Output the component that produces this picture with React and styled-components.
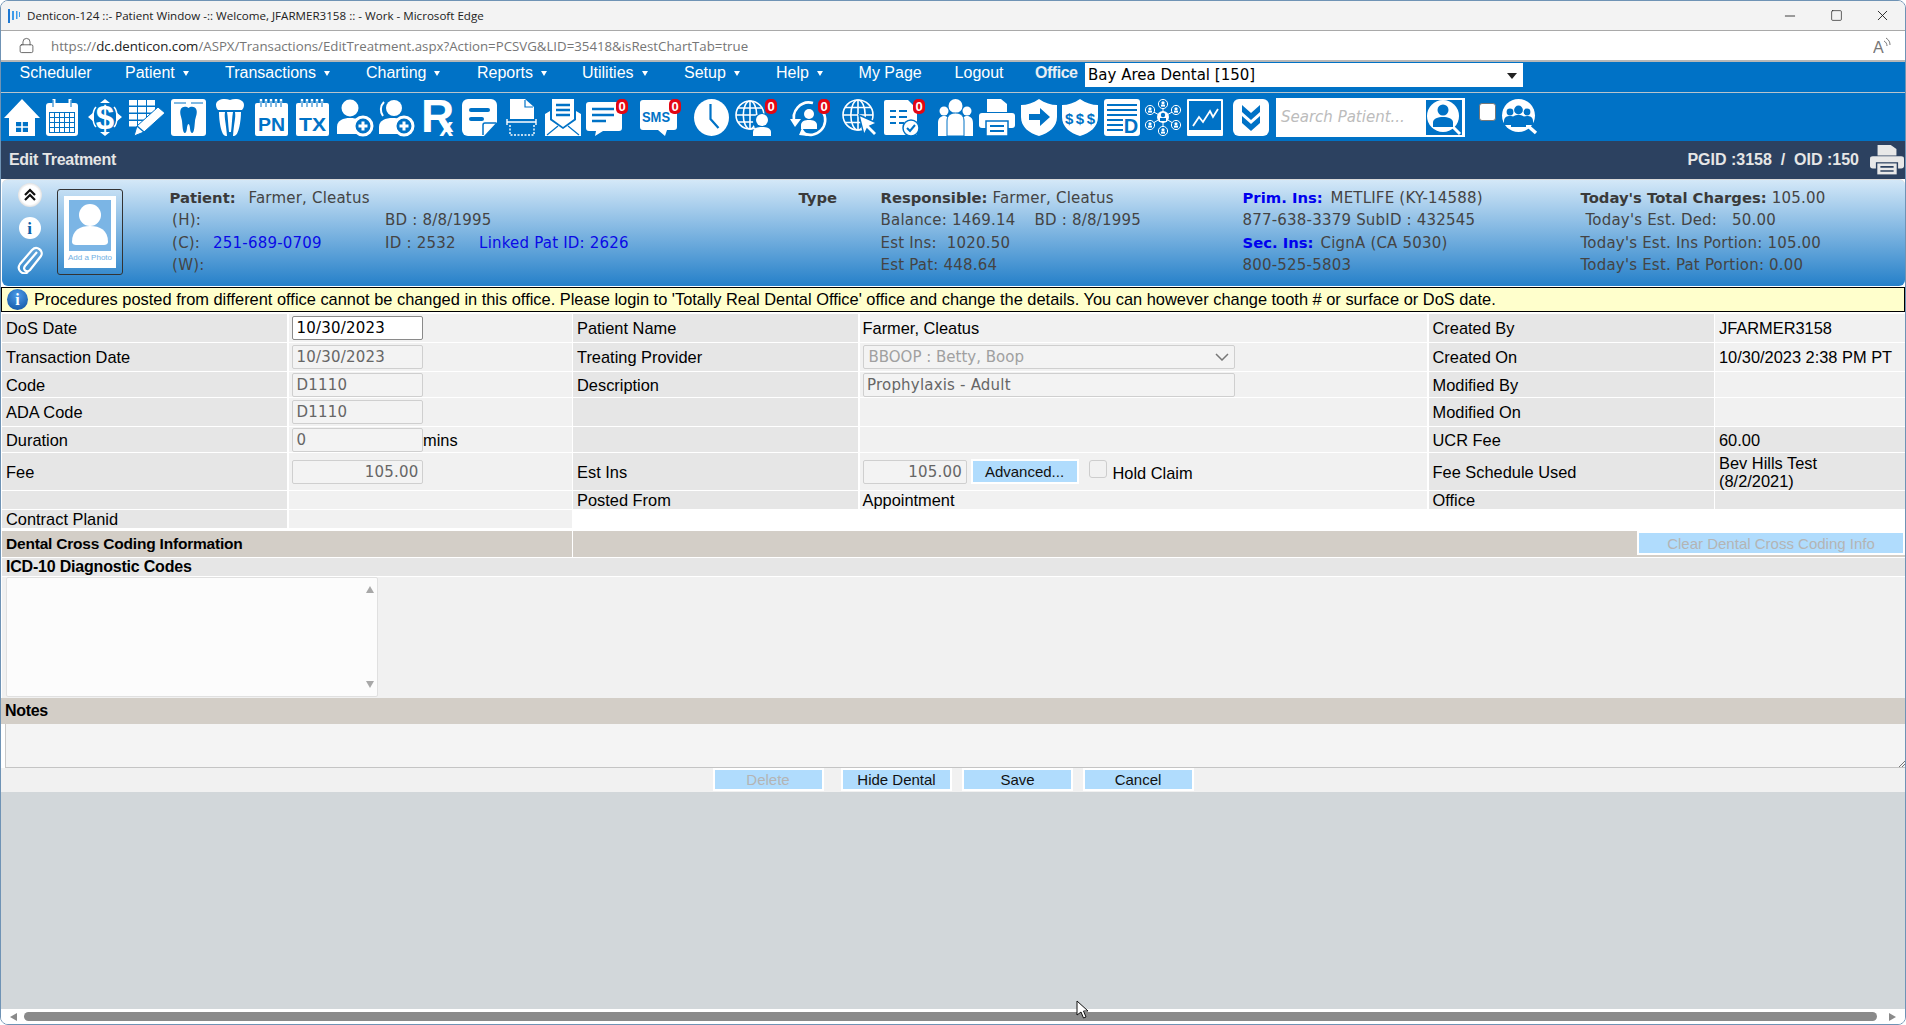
import React from 'react';
import styled, { createGlobalStyle } from 'styled-components';
import { Lock, Minus, Square, X } from 'lucide-react';

const BLUE = '#0072C6';
const ARIAL = '"Liberation Sans", Arial, sans-serif';
const VERDANA = '"DejaVu Sans", Verdana, sans-serif';

const GlobalStyle = createGlobalStyle`
  html, body {
    margin: 0;
    height: 100%;
    overflow: hidden;
    background: #fff;
  }
  #root {
    height: 100%;
  }
  * {
    box-sizing: border-box;
  }
`;

const Win = styled.div`
  position: relative;
  height: 100vh;
  display: flex;
  flex-direction: column;
  border: 1px solid #6f93b5;
  border-radius: 8px 8px 8px 8px;
  overflow: hidden;
  background: #fff;
  font-family: ${ARIAL};
  font-size: 16px;
  color: #000;
`;

const TitleBar = styled.div`
  height: 30px;
  flex: none;
  display: flex;
  align-items: center;
  background: #f3f3f3;
  border-bottom: 1px solid #a9a9a9;
  padding-left: 6px;
  font-family: "Open Sans", sans-serif;
  font-size: 11.6px;
  color: #222;
`;

const TitleText = styled.span`
  margin-left: 7px;
  flex: 1;
`;

const WinButton = styled.span`
  width: 46px;
  display: flex;
  justify-content: center;
  color: #111;
`;

const AddressBar = styled.div`
  height: 31px;
  flex: none;
  display: flex;
  align-items: center;
  background: #fff;
  border-bottom: 2px solid #b7b7b7;
  padding: 0 14px 0 17px;
  font-family: "Open Sans", sans-serif;
  font-size: 13.25px;
  color: #767676;
`;

const Url = styled.span`
  margin-left: 16px;
  flex: 1;
  b {
    font-weight: 400;
    color: #222;
  }
`;

const Nav = styled.div`
  height: 31px;
  flex: none;
  display: flex;
  align-items: flex-start;
  background: ${BLUE};
  border-bottom: 1px solid #b9c4cc;
  padding-left: 18.6px;
  color: #fff;
  line-height: 22px;
`;

const NavItem = styled.div`
  width: ${p => p.$w}px;
  flex: none;
  display: flex;
  align-items: center;
`;

const NavCaret = styled.span`
  margin-left: 8px;
  margin-top: 1px;
  border-left: 3px solid transparent;
  border-right: 3px solid transparent;
  border-top: 5px solid #fff;
`;

const OfficeLabel = styled.b`
  width: 50px;
  flex: none;
  color: #e8eef3;
  letter-spacing: -0.5px;
`;

const OfficeSelect = styled.div`
  width: 438px;
  height: 24px;
  margin-top: 1px;
  display: flex;
  align-items: center;
  justify-content: space-between;
  padding: 0 6px 0 3px;
  background: #fff;
  color: #000;
  font-family: ${VERDANA};
  font-size: 15px;
`;

const OfficeCaret = styled.span`
  margin-top: 2px;
  border-left: 5px solid transparent;
  border-right: 5px solid transparent;
  border-top: 6px solid #222;
`;

const Toolbar = styled.div`
  height: 48px;
  flex: none;
  display: flex;
  align-items: center;
  background: ${BLUE};
  padding-left: 3px;
`;

const ToolSlot = styled.div`
  position: relative;
  flex: none;
  display: flex;
  margin-left: ${p => p.$gap}px;
  width: ${p => p.$w}px;
  height: 37px;
`;

const Badge = styled.span`
  position: absolute;
  top: 0;
  right: -1px;
  width: 12px;
  height: 15px;
  border-radius: 5px;
  background: #e30613;
  color: #fff;
  font: 700 13px/15px ${ARIAL};
  text-align: center;
`;

const SearchBox = styled.div`
  width: 189px;
  height: 39px;
  margin-left: 7px;
  flex: none;
  display: flex;
  align-items: center;
  justify-content: space-between;
  background: #fff;
  padding: 0 3px 0 5px;
  font: italic 15px ${VERDANA};
  color: #bcbcbc;
`;

const ToolCheck = styled.span`
  width: 17px;
  height: 18px;
  margin: 0 0 10px 14px;
  flex: none;
  background: #fff;
  border: 1px solid #777;
  border-radius: 3px;
`;

const PageBar = styled.div`
  height: 38px;
  flex: none;
  display: flex;
  align-items: center;
  justify-content: space-between;
  background: #2c4160;
  color: #e6e6e6;
  font-weight: 700;
  padding: 0 1px 0 8px;
`;

const PageTitle = styled.span`
  letter-spacing: -0.3px;
`;

const PageIds = styled.div`
  display: flex;
  align-items: center;
  gap: 11px;
`;

const PatientHeader = styled.div`
  height: 107px;
  flex: none;
  margin: 0 0 1px 1px;
  display: flex;
  align-items: flex-start;
  border-radius: 6px;
  background: linear-gradient(#d4e8f8, #2580c9);
  border-top: 1px solid #d9d9d9;
  padding-top: 7px;
  font-family: ${VERDANA};
  font-size: 15px;
  line-height: 22.4px;
  color: #444;
`;

const SideIcons = styled.div`
  width: 55px;
  flex: none;
  margin-top: -4px;
  display: flex;
  flex-direction: column;
  align-items: center;
`;

const RoundIcon = styled.span`
  width: ${p => p.$size}px;
  height: ${p => p.$size}px;
  margin-bottom: ${p => p.$mb}px;
  border-radius: 50%;
  display: flex;
  align-items: center;
  justify-content: center;
  background: ${p => p.$bg};
  color: #0d5ea8;
  font: 700 17px/1 "Liberation Serif", serif;
`;

const PhotoFrame = styled.div`
  width: 66px;
  height: 86px;
  flex: none;
  margin-top: 2px;
  display: flex;
  align-items: center;
  justify-content: center;
  border: 1px solid #333;
  border-radius: 3px;
`;

const PhotoCard = styled.div`
  width: 52px;
  height: 72px;
  display: flex;
  flex-direction: column;
  align-items: center;
  padding-top: 4px;
  background: #fff;
  font: 8px/14px ${ARIAL};
  color: #6eaee3;
`;

const InfoColumn = styled.div`
  width: ${p => p.$w}px;
  margin-left: ${p => p.$ml || 0}px;
  flex: none;
  letter-spacing: 0.2px;
`;

const Line = styled.div`
  display: flex;
  height: 22.4px;
  white-space: nowrap;
  padding-left: ${p => p.$pl || 0}px;
`;

const Part = styled.span`
  width: ${p => p.$w}px;
  flex: none;
`;

const Strong = styled.b`
  color: ${p => (p.$blue ? '#0000ee' : '#3a3a3a')};
  font-size: 14.8px;
  font-weight: 700;
  letter-spacing: 0;
`;

const Linked = styled.span`
  color: #0a0ae6;
`;

const Alert = styled.div`
  height: 25px;
  flex: none;
  display: flex;
  align-items: center;
  gap: 6px;
  border: 1px solid #000;
  background: #ffffcc;
  padding-left: 5px;
  font-size: 16.4px;
`;

const InfoDot = styled.span`
  width: 21px;
  height: 21px;
  flex: none;
  border-radius: 50%;
  display: flex;
  align-items: center;
  justify-content: center;
  background: radial-gradient(circle at 50% 30%, #4d9be8, #0b4f9e);
  color: #fff;
  font: 700 16px/1 "Liberation Serif", serif;
`;

const FormGrid = styled.div`
  flex: none;
  margin: 2px 0 0 1px;
  display: grid;
  grid-template-columns: 285px 283px 285px 567.5px 285px 1fr;
  grid-template-rows: 28px 28px 25px 28px 25px 37px 18px 18px;
  column-gap: 1.5px;
  row-gap: 1px;
`;

const Cell = styled.div`
  display: flex;
  align-items: center;
  min-width: 0;
  background: ${p => (p.$label ? '#e6e6e6' : '#f1f1f1')};
  padding-left: ${p => p.$pl || (p.$label ? 4 : 3.5)}px;
  font-size: 16.4px;
  line-height: 18px;
  white-space: nowrap;
`;

const Field = styled.input`
  width: ${p => p.$w}px;
  height: 24px;
  flex: none;
  padding: 0 3.5px;
  border: 1px solid ${p => (p.$active ? '#8a8a8a' : '#cfcfcf')};
  border-radius: 2px;
  background: ${p => (p.$active ? '#fff' : '#f3f3f3')};
  color: ${p => (p.$active ? '#000' : '#666')};
  font-family: ${VERDANA};
  font-size: 15px;
  letter-spacing: 0.2px;
  text-align: ${p => (p.$right ? 'right' : 'left')};
  outline: none;
`;

const SelectBox = styled.div`
  width: 372px;
  height: 24px;
  display: flex;
  align-items: center;
  justify-content: space-between;
  padding: 0 5px;
  border: 1px solid #cfcfcf;
  border-radius: 2px;
  background: #f3f3f3;
  color: #a0a0a0;
  font-family: ${VERDANA};
  font-size: 15px;
`;

const Btn = styled.button`
  width: ${p => p.$w}px;
  height: ${p => p.$h || 23}px;
  flex: none;
  margin-left: ${p => p.$ml || 0}px;
  margin-bottom: ${p => p.$mb || 0}px;
  padding: 0;
  border: 2px solid #fff;
  background: #b0dcfd;
  color: ${p => (p.disabled ? '#b4b4b4' : '#111')};
  font-family: ${ARIAL};
  font-size: 15px;
`;

const CheckBox = styled.span`
  width: 18px;
  height: 18px;
  flex: none;
  margin: -6px 0 0 10px;
  border: 1px solid #cdcdcd;
  border-radius: 3px;
  background: #f1f1f1;
`;

const HoldLabel = styled.span`
  margin: 3px 0 0 6px;
`;

const CrossRow = styled.div`
  height: 26px;
  flex: none;
  margin: 3px 0 0 1px;
  display: grid;
  grid-template-columns: 569.5px 1fr;
  column-gap: 1.5px;
`;

const Band = styled.div`
  display: flex;
  align-items: center;
  justify-content: ${p => (p.$end ? 'flex-end' : 'flex-start')};
  background: #d3cec7;
  padding-left: 4px;
  font-size: 15.5px;
  letter-spacing: -0.2px;
  font-weight: ${p => (p.$end ? 400 : 700)};
`;

const IcdTitle = styled.div`
  height: 18px;
  flex: none;
  margin: 1px 0 0 1px;
  display: flex;
  align-items: center;
  background: #e6e6e6;
  padding-left: 4px;
  font-weight: 700;
  letter-spacing: -0.2px;
`;

const IcdArea = styled.div`
  height: 121px;
  flex: none;
  margin: 1px 0 0 1px;
  background: #f1f1f1;
  padding-left: 4px;
`;

const ListBox = styled.div`
  width: 372px;
  height: 120px;
  display: flex;
  flex-direction: column;
  align-items: flex-end;
  justify-content: space-between;
  padding: 8px 3px 8px 0;
  border: 1px solid #e0e0e0;
  border-radius: 2px;
  background: #fcfcfc;
`;

const ScrollTri = styled.span`
  border-left: 4.5px solid transparent;
  border-right: 4.5px solid transparent;
  ${p => (p.$down ? 'border-top' : 'border-bottom')}: 7px solid #a8a8a8;
`;

const NotesTitle = styled(Band)`
  height: 26px;
  flex: none;
  justify-content: flex-start;
  padding-left: 4px;
  font-size: 16px;
  letter-spacing: -0.3px;
  font-weight: 700;
`;

const NotesBox = styled.div`
  position: relative;
  height: 44px;
  flex: none;
  margin-left: 4px;
  background: #f4f4f4;
  border-left: 1px solid #c8c8c8;
  border-bottom: 1px solid #c4c4c4;
`;

const Grip = styled.svg`
  position: absolute;
  right: 0;
  bottom: 0;
`;

const Actions = styled.div`
  height: 24px;
  flex: none;
  display: flex;
  justify-content: center;
  background: #f1f1f1;
`;

const Backdrop = styled.div`
  flex: 1;
  background: #d2d7da;
`;

const HScroll = styled.div`
  height: 15px;
  flex: none;
  display: flex;
  align-items: center;
  background: #fff;
  padding: 0 9px 0 9px;
`;

const HTri = styled.span`
  flex: none;
  border-top: 4.5px solid transparent;
  border-bottom: 4.5px solid transparent;
  ${p => (p.$right ? 'border-left' : 'border-right')}: 7px solid #8a8a8a;
`;

const HThumb = styled.div`
  height: 9px;
  flex: 1;
  margin: 0 12px 0 7px;
  border-radius: 5px;
  background: #8a8a8a;
`;

const Pointer = styled.svg`
  position: absolute;
  left: 1075px;
  top: 999px;
`;

// toolbar drawings, all on the 37px high white-on-blue grid
const Head = ({ x, y, r, fill = '#fff' }) => <circle cx={x} cy={y} r={r} fill={fill} />;
const Body = ({ x, y, w, h, fill = '#fff' }) => (
  <path
    d={`M${x} ${y + h}v${-h * 0.45}c0 ${-h * 0.4} ${w * 0.25} ${-h * 0.55} ${w / 2} ${-h * 0.55}s${w / 2} ${h * 0.15} ${w / 2} ${h * 0.55}v${h * 0.45}z`}
    fill={fill}
  />
);
const PlusDisc = ({ x, y, r = 9 }) => (
  <g>
    <circle cx={x} cy={y} r={r} fill={BLUE} stroke="#fff" strokeWidth="3" />
    <path d={`M${x - 4.5} ${y}h9M${x} ${y - 4.5}v9`} stroke="#fff" strokeWidth="3" />
  </g>
);
const Svg = ({ w, children, h = 37 }) => (
  <svg width={w} height={h} viewBox={`0 0 ${w} ${h}`} fill="none" overflow="visible">
    {children}
  </svg>
);
const Globe = ({ x, y, r }) => (
  <g stroke="#fff" strokeWidth="1.6" fill="none">
    <circle cx={x} cy={y} r={r} />
    <ellipse cx={x} cy={y} rx={r * 0.48} ry={r} />
    <path d={`M${x} ${y - r}v${2 * r}M${x - r} ${y}h${2 * r}M${x - r * 0.85} ${y - r * 0.5}h${1.7 * r}M${x - r * 0.85} ${y + r * 0.5}h${1.7 * r}`} />
  </g>
);
const SHIELD = 'M18 0C24 4 30 6 36 6V18C36 28 28 34 18 37C8 34 0 28 0 18V6C6 6 12 4 18 0Z';

const HomeIcon = () => (
  <Svg w={36}>
    <path d="M18 0L36 19H31V37H5V19H0Z" fill="#fff" />
    <path d="M12 23h12v10H12z" fill={BLUE} />
    <path d="M18 23v10M12 28h12" stroke="#fff" strokeWidth="1.6" />
  </Svg>
);
const CalendarIcon = () => (
  <Svg w={32}>
    <rect y="4" width="32" height="33" rx="3" fill="#fff" />
    <path d="M8 0v8M24 0v8" stroke="#fff" strokeWidth="3" />
    <path d="M7 1v7M25 1v7" stroke={BLUE} strokeWidth="1" />
    <rect x="3" y="13" width="26" height="21" fill={BLUE} />
    {[0, 1, 2, 3].map(r => [0, 1, 2, 3, 4].map(c => (
      <rect key={`${r}-${c}`} x={4 + c * 5} y={14 + r * 5} width="4" height="4" fill="#fff" />
    )))}
  </Svg>
);
const DollarIcon = () => (
  <Svg w={34}>
    <text x="17" y="30" textAnchor="middle" fontFamily={ARIAL} fontWeight="700" fontSize="33" fill="#fff">$</text>
    <path d="M0 18l6-5v10zM34 18l-6-5v10zM17 0l5 4H12zM17 37l-5-4h10z" fill="#fff" />
    <path d="M8 8C4 12 4 24 8 28M26 8c4 4 4 16 0 20" stroke="#fff" strokeWidth="1.5" />
  </Svg>
);
const NotesIcon = () => (
  <Svg w={36}>
    {[0, 1, 2, 3].map(r => [0, 1, 2].map(c => (
      <rect key={`${r}-${c}`} x={c * 9} y={1 + r * 7} width="8" height="5.5" fill="#fff" opacity={r + c > 4 ? 0 : 1} />
    )))}
    <path d="M5 37l3-10L29 8l7 6L15 33z" fill="#fff" stroke={BLUE} strokeWidth="1" />
    <path d="M8 27l7 6" stroke={BLUE} strokeWidth="1.4" />
  </Svg>
);
const ToothCardIcon = () => (
  <Svg w={35}>
    <rect width="35" height="37" rx="3" fill="#fff" />
    <path d="M17.5 9c-2-2-7-2-8 2-1 4 1 7 1.500 11 .5 4 .5 12 3 12s1.500-9 3.500-9 1 9 3.500 9 2.500-8 3-12 2.500-7 1.500-11c-1-4-6-4-8-2z" fill={BLUE} />
    <path d="M3 4h12M20 4h12" stroke={BLUE} strokeWidth="1" />
  </Svg>
);
const CrownIcon = () => (
  <Svg w={28}>
    <path d="M14 1C9-1 0 0 0 6c0 2 1 4 2 5h24c1-1 2-3 2-5 0-6-9-7-14-5z" fill="#fff" />
    <path d="M3 13h6c-1 6 1 10 2 24h-1C5 37 3 21 3 13zM25 13h-6c1 6-1 10-2 24h1c5 0 7-16 7-24zM11 13h6c-1 5-1 12-2 20h-2c-1-8-1-15-2-20z" fill="#fff" />
  </Svg>
);
const CardText = ({ label }) => (
  <Svg w={33}>
    <rect y="4" width="33" height="33" rx="2" fill="#fff" />
    {[6, 11, 16, 21, 26].map(x => <path key={x} d={`M${x} 0v8`} stroke="#fff" strokeWidth="2.4" />)}
    {[6, 11, 16, 21, 26].map(x => <path key={x} d={`M${x} 2v6`} stroke={BLUE} strokeWidth="1" />)}
    <text x="16.5" y="32" textAnchor="middle" fontFamily={ARIAL} fontWeight="700" fontSize="19" textLength="27" lengthAdjust="spacingAndGlyphs" fill={BLUE}>{label}</text>
  </Svg>
);
const PersonPlusIcon = () => (
  <Svg w={36}>
    <Head x={13} y={9} r={8.5} />
    <Body x={0} y={19} w={26} h={16} />
    <PlusDisc x={26} y={27} />
  </Svg>
);
const PersonPlus2Icon = () => (
  <Svg w={36}>
    <Head x={16} y={9} r={8} />
    <path d="M6 3C2 7 2 13 5 17" stroke="#fff" strokeWidth="2" />
    <Body x={1} y={19} w={27} h={16} />
    <PlusDisc x={26} y={27} />
  </Svg>
);
const RxIcon = () => (
  <Svg w={33}>
    <text x="0" y="33" fontFamily={ARIAL} fontWeight="700" fontSize="46" fill="#fff">
      R<tspan dx="-15" dy="4" fontSize="25">x</tspan>
    </text>
  </Svg>
);
const NoteIcon = () => (
  <Svg w={35}>
    <path d="M6 0h23a6 6 0 0 1 6 6v17L22 37H6a6 6 0 0 1-6-6V6a6 6 0 0 1 6-6z" fill="#fff" />
    <rect x="7" y="9" width="21" height="4" rx="2" fill={BLUE} />
    <rect x="7" y="18" width="15" height="4" rx="2" fill={BLUE} />
    <path d="M21 36V26a2 2 0 0 1 2-2h11" stroke={BLUE} strokeWidth="1.5" />
  </Svg>
);
const ScanIcon = () => (
  <Svg w={31}>
    <path d="M4 0h15l9 8v12H4z" fill="#fff" />
    <path d="M19 1v7h8" stroke={BLUE} strokeWidth="1.2" />
    <path d="M1 23h29" stroke="#fff" strokeWidth="1.6" />
    <path d="M1 20v6M30 20v6" stroke="#fff" strokeWidth="1.4" />
    <path d="M4 26v10h24V26" stroke="#fff" strokeWidth="1.4" strokeDasharray="2 1.5" />
  </Svg>
);
const MailIcon = () => (
  <Svg w={36}>
    <path d="M7 0h22v20l-11 8-11-8z" fill="#fff" />
    <path d="M11 6h14M11 11h14M11 16h14" stroke={BLUE} strokeWidth="2.4" />
    <path d="M0 15l5-3v9l13 9 13-9v-9l5 3v22H0z" fill="#fff" />
    <path d="M2 36l11-9M34 36l-11-9" stroke={BLUE} strokeWidth="1.2" />
  </Svg>
);
const ChatIcon = () => (
  <Svg w={41}>
    <path d="M3 3h30a3 3 0 0 1 3 3v23a3 3 0 0 1-3 3H17l-8 5 1-5H3a3 3 0 0 1-3-3V6a3 3 0 0 1 3-3z" fill="#fff" />
    <path d="M6 10h22M6 16h22M6 22h14" stroke={BLUE} strokeWidth="2.6" />
  </Svg>
);
const SmsIcon = () => (
  <Svg w={40}>
    <path d="M3 1h31a3 3 0 0 1 3 3v24a3 3 0 0 1-3 3h-7l-2 6-7-6H3a3 3 0 0 1-3-3V4a3 3 0 0 1 3-3z" fill="#fff" />
    <text x="16" y="23" textAnchor="middle" fontFamily={ARIAL} fontWeight="700" fontSize="15" textLength="28" lengthAdjust="spacingAndGlyphs" fill={BLUE}>SMS</text>
  </Svg>
);
const ClockIcon = () => (
  <Svg w={35}>
    <ellipse cx="17.5" cy="18.5" rx="17.5" ry="18.5" fill="#fff" />
    <path d="M16.5 5v15l8 9" stroke={BLUE} strokeWidth="2.2" />
  </Svg>
);
const GlobePersonIcon = () => (
  <Svg w={41}>
    <Globe x={15} y={16} r={14} />
    <circle cx="27" cy="23" r="9" fill={BLUE} />
    <Head x={27} y={21} r={6} />
    <Body x={18} y={28} w={18} h={9} />
  </Svg>
);
const SyncPersonIcon = () => (
  <Svg w={40}>
    <path d="M6 24A15 15 0 0 1 24 4" stroke="#fff" strokeWidth="2.6" />
    <path d="M34 13A15 15 0 0 1 14 34" stroke="#fff" strokeWidth="2.6" />
    <path d="M1 20h11l-6 8zM19 37l-6-8-3 7z" fill="#fff" />
    <Head x={20} y={15} r={5} />
    <Body x={12} y={21} w={16} h={9} />
  </Svg>
);
const GlobeCursorIcon = () => (
  <Svg w={36}>
    <Globe x={16} y={16} r={15} />
    <path d="M17 16l18 8-7 3 7 7-3 3-7-7-3 6z" fill="#fff" stroke={BLUE} strokeWidth="1.4" />
  </Svg>
);
const DocCheckIcon = () => (
  <Svg w={40}>
    <path d="M2 1h22l9 9v26H2a2 2 0 0 1-2-2V3a2 2 0 0 1 2-2z" fill="#fff" />
    <path d="M6 12h6M15 12h8M6 18h6M15 18h8M6 24h6M15 24h5" stroke={BLUE} strokeWidth="2" />
    <circle cx="27" cy="29" r="8" fill="#fff" stroke={BLUE} strokeWidth="1.5" />
    <path d="M23 29l3 3 5-6" stroke={BLUE} strokeWidth="2" />
  </Svg>
);
const PeopleIcon = () => (
  <Svg w={35}>
    <Head x={6} y={12} r={4.5} />
    <Head x={29} y={12} r={4.5} />
    <path d="M0 37V24c0-5 3-7 6-7s6 2 6 7v13zM23 37V24c0-5 3-7 6-7s6 2 6 7v13z" fill="#fff" />
    <Head x={17.5} y={7} r={7} />
    <path d="M9 37V22c0-6 4-8 8.500-8S26 16 26 22v15z" fill="#fff" stroke={BLUE} strokeWidth="1" />
  </Svg>
);
const PrinterIcon = ({ fill = '#fff', back = BLUE, w = 36, h = 37 }) => (
  <svg width={w} height={h} viewBox="0 0 36 37" fill="none" preserveAspectRatio="none">
    <path d="M8 0h14l6 5v8H8z" fill={fill} />
    <rect y="14" width="36" height="15" rx="3" fill={fill} />
    <rect x="7" y="22" width="22" height="15" fill={fill} stroke={back} strokeWidth="1.5" />
    <path d="M11 27h14M11 32h14" stroke={back} strokeWidth="2" />
  </svg>
);
const ShieldArrowIcon = () => (
  <Svg w={36}>
    <path d={SHIELD} fill="#fff" />
    <path d="M8 15h11V9l10 9-10 9v-6H8z" fill={BLUE} />
  </Svg>
);
const ShieldDollarIcon = () => (
  <Svg w={36}>
    <path d={SHIELD} fill="#fff" />
    <text x="18" y="25" textAnchor="middle" fontFamily={ARIAL} fontWeight="700" fontSize="15" textLength="30" lengthAdjust="spacing" fill={BLUE}>$$$</text>
  </Svg>
);
const DocDIcon = () => (
  <Svg w={36}>
    <rect width="36" height="37" rx="3" fill="#fff" />
    <path d="M3 6h30M3 11h30M3 16h30M3 21h16M3 26h16M3 31h16" stroke={BLUE} strokeWidth="2" />
    <text x="27" y="34" textAnchor="middle" fontFamily={ARIAL} fontWeight="700" fontSize="20" fill={BLUE}>D</text>
  </Svg>
);
const NetworkIcon = () => {
  const nodes = [[18, 5], [5, 11], [31, 11], [5, 26], [31, 26], [18, 32]];
  return (
    <Svg w={36}>
      {nodes.map(([x, y]) => <path key={`${x}${y}`} d={`M18 18L${x} ${y}`} stroke="#fff" strokeWidth="1" />)}
      {nodes.map(([x, y]) => (
        <g key={`${x}-${y}`}>
          <circle cx={x} cy={y} r="4.6" fill={BLUE} stroke="#fff" strokeWidth="1" />
          <Head x={x} y={y - 1.2} r={1.6} />
          <rect x={x - 2} y={y + 0.6} width="4" height="2" fill="#fff" />
        </g>
      ))}
      <circle cx="18" cy="18" r="6" fill="#fff" />
      <Head x={18} y={16} r={2.2} fill={BLUE} />
      <rect x="15" y="19" width="6" height="3" fill={BLUE} />
    </Svg>
  );
};
const ChartIcon = () => (
  <Svg w={36}>
    <rect width="36" height="37" rx="1" fill="#fff" />
    <rect x="2" y="2" width="32" height="29" fill={BLUE} />
    <path d="M6 27l6-9 4 5 7-11 3 6 5-8" stroke="#fff" strokeWidth="1.8" />
  </Svg>
);
const ChevronsIcon = () => (
  <Svg w={36}>
    <rect width="36" height="37" rx="6" fill="#fff" />
    <path d="M9 6l9 8 9-8v7l-9 8-9-8zM9 17l9 8 9-8v7l-9 8-9-8z" fill={BLUE} />
  </Svg>
);
const FindPersonIcon = () => (
  <Svg w={36} h={35}>
    <rect width="36" height="35" fill={BLUE} />
    <circle cx="17" cy="16" r="16" fill="#fff" />
    <path d="M27 27l7 7" stroke="#fff" strokeWidth="3" />
    <Head x={17} y={10} r={5.5} fill={BLUE} />
    <Body x={7} y={17} w={20} h={10} fill={BLUE} />
  </Svg>
);
const FindGroupIcon = () => (
  <Svg w={36} h={35}>
    <circle cx="16.500" cy="16.500" r="16.500" fill="#fff" />
    <path d="M26 27l8 7" stroke="#fff" strokeWidth="3.400" />
    <Head x={8} y={13} r={3.4} fill={BLUE} />
    <Head x={25} y={13} r={3.4} fill={BLUE} />
    <Body x={2} y={17} w={12} h={9} fill={BLUE} />
    <Body x={19} y={17} w={12} h={9} fill={BLUE} />
    <Head x={16.5} y={11} r={4.4} fill={BLUE} />
    <Body x={9} y={16} w={15} h={12} fill={BLUE} />
  </Svg>
);

const TOOLS = [
  { icon: <HomeIcon />, w: 36, gap: 0 },
  { icon: <CalendarIcon />, w: 32, gap: 6 },
  { icon: <DollarIcon />, w: 34, gap: 10 },
  { icon: <NotesIcon />, w: 36, gap: 7 },
  { icon: <ToothCardIcon />, w: 35, gap: 6 },
  { icon: <CrownIcon />, w: 28, gap: 10 },
  { icon: <CardText label="PN" />, w: 33, gap: 11 },
  { icon: <CardText label="TX" />, w: 33, gap: 8 },
  { icon: <PersonPlusIcon />, w: 36, gap: 8 },
  { icon: <PersonPlus2Icon />, w: 36, gap: 5 },
  { icon: <RxIcon />, w: 33, gap: 7 },
  { icon: <NoteIcon />, w: 35, gap: 8 },
  { icon: <ScanIcon />, w: 31, gap: 9 },
  { icon: <MailIcon />, w: 36, gap: 8 },
  { icon: <ChatIcon />, w: 41, gap: 5, badge: true },
  { icon: <SmsIcon />, w: 40, gap: 13, badge: true },
  { icon: <ClockIcon />, w: 35, gap: 14 },
  { icon: <GlobePersonIcon />, w: 41, gap: 6, badge: true },
  { icon: <SyncPersonIcon />, w: 40, gap: 13, badge: true },
  { icon: <GlobeCursorIcon />, w: 36, gap: 13 },
  { icon: <DocCheckIcon />, w: 40, gap: 6, badge: true },
  { icon: <PeopleIcon />, w: 35, gap: 14 },
  { icon: <PrinterIcon />, w: 36, gap: 6 },
  { icon: <ShieldArrowIcon />, w: 36, gap: 6 },
  { icon: <ShieldDollarIcon />, w: 36, gap: 5 },
  { icon: <DocDIcon />, w: 36, gap: 6 },
  { icon: <NetworkIcon />, w: 36, gap: 5 },
  { icon: <ChartIcon />, w: 36, gap: 6 },
  { icon: <ChevronsIcon />, w: 36, gap: 10 }
];

const MENU = [
  { label: 'Scheduler', w: 105.4 },
  { label: 'Patient', w: 100, caret: true },
  { label: 'Transactions', w: 141, caret: true },
  { label: 'Charting', w: 111, caret: true },
  { label: 'Reports', w: 105, caret: true },
  { label: 'Utilities', w: 102, caret: true },
  { label: 'Setup', w: 92, caret: true },
  { label: 'Help', w: 82.6, caret: true },
  { label: 'My Page', w: 96 },
  { label: 'Logout', w: 80.5 }
];

function App() {
  return (
    <Win>
      <GlobalStyle />
      <TitleBar>
        <svg width="13" height="16" viewBox="0 0 13 16">
          <path d="M1 1h2v14H1z" fill="#1e78d2" />
          <path d="M5 3h2v9H5zM9 3h1.500v8H9zM12 4h1v5h-1z" fill="#3d9be9" />
        </svg>
        <TitleText>Denticon-124 ::- Patient Window -:: Welcome, JFARMER3158 :: - Work - Microsoft Edge</TitleText>
        <WinButton><Minus size={16} strokeWidth={1.2} /></WinButton>
        <WinButton><Square size={13} strokeWidth={1.2} /></WinButton>
        <WinButton><X size={17} strokeWidth={1.2} /></WinButton>
      </TitleBar>
      <AddressBar>
        <Lock size={17} strokeWidth={1.1} color="#444" />
        <Url>
          https://<b>dc.denticon.com</b>/ASPX/Transactions/EditTreatment.aspx?Action=PCSVG&amp;LID=35418&amp;isRestChartTab=true
        </Url>
        <svg width="18" height="18" viewBox="0 0 18 18" fill="none">
          <text x="0" y="16" fontFamily={ARIAL} fontSize="16" fill="#777">A</text>
          <path d="M11 4c2 1 3 3 3 5M13 1c3 2 4 4 4 7" stroke="#777" strokeWidth="1" />
        </svg>
      </AddressBar>
      <Nav>
        {MENU.map(item => (
          <NavItem key={item.label} $w={item.w}>
            {item.label}
            {item.caret && <NavCaret />}
          </NavItem>
        ))}
        <OfficeLabel>Office</OfficeLabel>
        <OfficeSelect>
          Bay Area Dental [150]
          <OfficeCaret />
        </OfficeSelect>
      </Nav>
      <Toolbar>
        {TOOLS.map((tool, i) => (
          <ToolSlot key={i} $w={tool.w} $gap={tool.gap}>
            {tool.icon}
            {tool.badge && <Badge>0</Badge>}
          </ToolSlot>
        ))}
        <SearchBox>
          Search Patient...
          <FindPersonIcon />
        </SearchBox>
        <ToolCheck />
        <ToolSlot $w={36} $gap={6}>
          <FindGroupIcon />
        </ToolSlot>
      </Toolbar>
      <PageBar>
        <PageTitle>Edit Treatment</PageTitle>
        <PageIds>
          <span>PGID :3158&nbsp; /&nbsp; OID :150</span>
          <PrinterIcon fill="#e8e8e8" back="#2c4160" w={34} h={30} />
        </PageIds>
      </PageBar>
      <PatientHeader>
        <SideIcons>
          <RoundIcon $size={24} $mb={10} $bg="radial-gradient(#fff 55%, #a8a8a8)">
            <svg width="14" height="14" viewBox="0 0 14 14" fill="none">
              <path d="M2 7l5-5 5 5M2 12l5-5 5 5" stroke="#111" strokeWidth="2.2" />
            </svg>
          </RoundIcon>
          <RoundIcon $size={22} $mb={5} $bg="#fff">i</RoundIcon>
          <svg width="26" height="30" viewBox="0 0 26 30" fill="none">
            <path d="M20 8L8 22c-3 4 2 7 5 4L24 12c3-5-4-11-9-6L3 20c-4 6 3 12 8 8" stroke="#fff" strokeWidth="2.2" />
          </svg>
        </SideIcons>
        <PhotoFrame>
          <PhotoCard>
            <svg width="42" height="51" viewBox="0 0 42 51">
              <rect width="42" height="51" fill="#7bb5e5" />
              <circle cx="21" cy="15" r="11" fill="#fff" />
              <path d="M3 42c0-12 8-16 18-16s18 4 18 16c0 2-2 3-4 3H7c-2 0-4-1-4-3z" fill="#fff" />
            </svg>
            Add a Photo
          </PhotoCard>
        </PhotoFrame>
        <InfoColumn $w={629} $ml={46.5}>
          <Line><Part $w={79}><Strong>Patient:</Strong></Part>Farmer, Cleatus</Line>
          <Line $pl={2.6}><Part $w={213}>(H):</Part>BD : 8/8/1995</Line>
          <Line $pl={2.6}>
            <Part $w={41}>(C):</Part>
            <Part $w={172}><Linked>251-689-0709</Linked></Part>
            <Part $w={94}>ID : 2532</Part>
            <Linked>Linked Pat ID: 2626</Linked>
          </Line>
          <Line $pl={2.6}>(W):</Line>
        </InfoColumn>
        <InfoColumn $w={82}>
          <Line><Strong>Type</Strong></Line>
        </InfoColumn>
        <InfoColumn $w={362}>
          <Line><Part $w={112}><Strong>Responsible:</Strong></Part>Farmer, Cleatus</Line>
          <Line><Part $w={154}>Balance: 1469.14</Part>BD : 8/8/1995</Line>
          <Line>Est Ins:&nbsp; 1020.50</Line>
          <Line>Est Pat: 448.64</Line>
        </InfoColumn>
        <InfoColumn $w={338}>
          <Line><Part $w={88}><Strong $blue>Prim. Ins:</Strong></Part>METLIFE (KY-14588)</Line>
          <Line>877-638-3379 SubID : 432545</Line>
          <Line><Part $w={78}><Strong $blue>Sec. Ins:</Strong></Part>CignA (CA 5030)</Line>
          <Line>800-525-5803</Line>
        </InfoColumn>
        <InfoColumn $w={320}>
          <Line><Strong>Today's Total Charges:&nbsp;</Strong>105.00</Line>
          <Line $pl={5}>Today's Est. Ded:&nbsp;&nbsp; 50.00</Line>
          <Line>Today's Est. Ins Portion: 105.00</Line>
          <Line>Today's Est. Pat Portion: 0.00</Line>
        </InfoColumn>
      </PatientHeader>
      <Alert>
        <InfoDot>i</InfoDot>
        Procedures posted from different office cannot be changed in this office. Please login to 'Totally Real Dental Office' office and change the details. You can however change tooth # or surface or DoS date.
      </Alert>
      <FormGrid>
        <Cell $label>DoS Date</Cell>
        <Cell><Field $w={131} $active value="10/30/2023" readOnly /></Cell>
        <Cell $label>Patient Name</Cell>
        <Cell $pl={3}>Farmer, Cleatus</Cell>
        <Cell $label>Created By</Cell>
        <Cell $pl={4}>JFARMER3158</Cell>

        <Cell $label>Transaction Date</Cell>
        <Cell><Field $w={131} value="10/30/2023" readOnly /></Cell>
        <Cell $label>Treating Provider</Cell>
        <Cell $pl={3}>
          <SelectBox>
            BBOOP : Betty, Boop
            <svg width="14" height="8" viewBox="0 0 14 8" fill="none">
              <path d="M1 1l6 6 6-6" stroke="#777" strokeWidth="1.5" />
            </svg>
          </SelectBox>
        </Cell>
        <Cell $label>Created On</Cell>
        <Cell $pl={4}>10/30/2023 2:38 PM PT</Cell>

        <Cell $label>Code</Cell>
        <Cell><Field $w={131} value="D1110" readOnly /></Cell>
        <Cell $label>Description</Cell>
        <Cell $pl={3}><Field $w={372} value="Prophylaxis - Adult" readOnly /></Cell>
        <Cell $label>Modified By</Cell>
        <Cell />

        <Cell $label>ADA Code</Cell>
        <Cell><Field $w={131} value="D1110" readOnly /></Cell>
        <Cell $label />
        <Cell />
        <Cell $label>Modified On</Cell>
        <Cell />

        <Cell $label>Duration</Cell>
        <Cell><Field $w={131} value="0" readOnly />mins</Cell>
        <Cell $label />
        <Cell />
        <Cell $label>UCR Fee</Cell>
        <Cell $label>60.00</Cell>

        <Cell $label>Fee</Cell>
        <Cell><Field $w={131} $right value="105.00" readOnly /></Cell>
        <Cell $label>Est Ins</Cell>
        <Cell $pl={3}>
          <Field $w={104} $right value="105.00" readOnly />
          <Btn $w={108} $h={25} $ml={4}>Advanced...</Btn>
          <CheckBox />
          <HoldLabel>Hold Claim</HoldLabel>
        </Cell>
        <Cell $label>Fee Schedule Used</Cell>
        <Cell $label>Bev Hills Test<br />(8/2/2021)</Cell>

        <Cell $label />
        <Cell />
        <Cell $label>Posted From</Cell>
        <Cell $pl={3}>Appointment</Cell>
        <Cell $label>Office</Cell>
        <Cell $label />

        <Cell $label>Contract Planid</Cell>
        <Cell />
      </FormGrid>
      <CrossRow>
        <Band>Dental Cross Coding Information</Band>
        <Band $end>
          <Btn $w={268} $h={24} $mb={2} disabled>Clear Dental Cross Coding Info</Btn>
        </Band>
      </CrossRow>
      <IcdTitle>ICD-10 Diagnostic Codes</IcdTitle>
      <IcdArea>
        <ListBox>
          <ScrollTri />
          <ScrollTri $down />
        </ListBox>
      </IcdArea>
      <NotesTitle>Notes</NotesTitle>
      <NotesBox>
        <Grip width="6" height="6" viewBox="0 0 6 6" fill="none">
          <path d="M0 6l6-6M3 6l3-3" stroke="#555" strokeWidth="0.8" />
        </Grip>
      </NotesBox>
      <Actions>
        <Btn $w={111} $h={23} disabled>Delete</Btn>
        <Btn $w={111} $h={23} $ml={17.5}>Hide Dental</Btn>
        <Btn $w={111} $h={23} $ml={10}>Save</Btn>
        <Btn $w={111} $h={23} $ml={9.5}>Cancel</Btn>
      </Actions>
      <Backdrop />
      <HScroll>
        <HTri />
        <HThumb />
        <HTri $right />
      </HScroll>
      <Pointer width="14" height="19" viewBox="0 0 14 19">
        <path d="M1 1v14l4-3 2.500 6 2.500-1-2.500-6H12z" fill="#fff" stroke="#111" strokeWidth="1" />
      </Pointer>
    </Win>
  );
}

export default App;
